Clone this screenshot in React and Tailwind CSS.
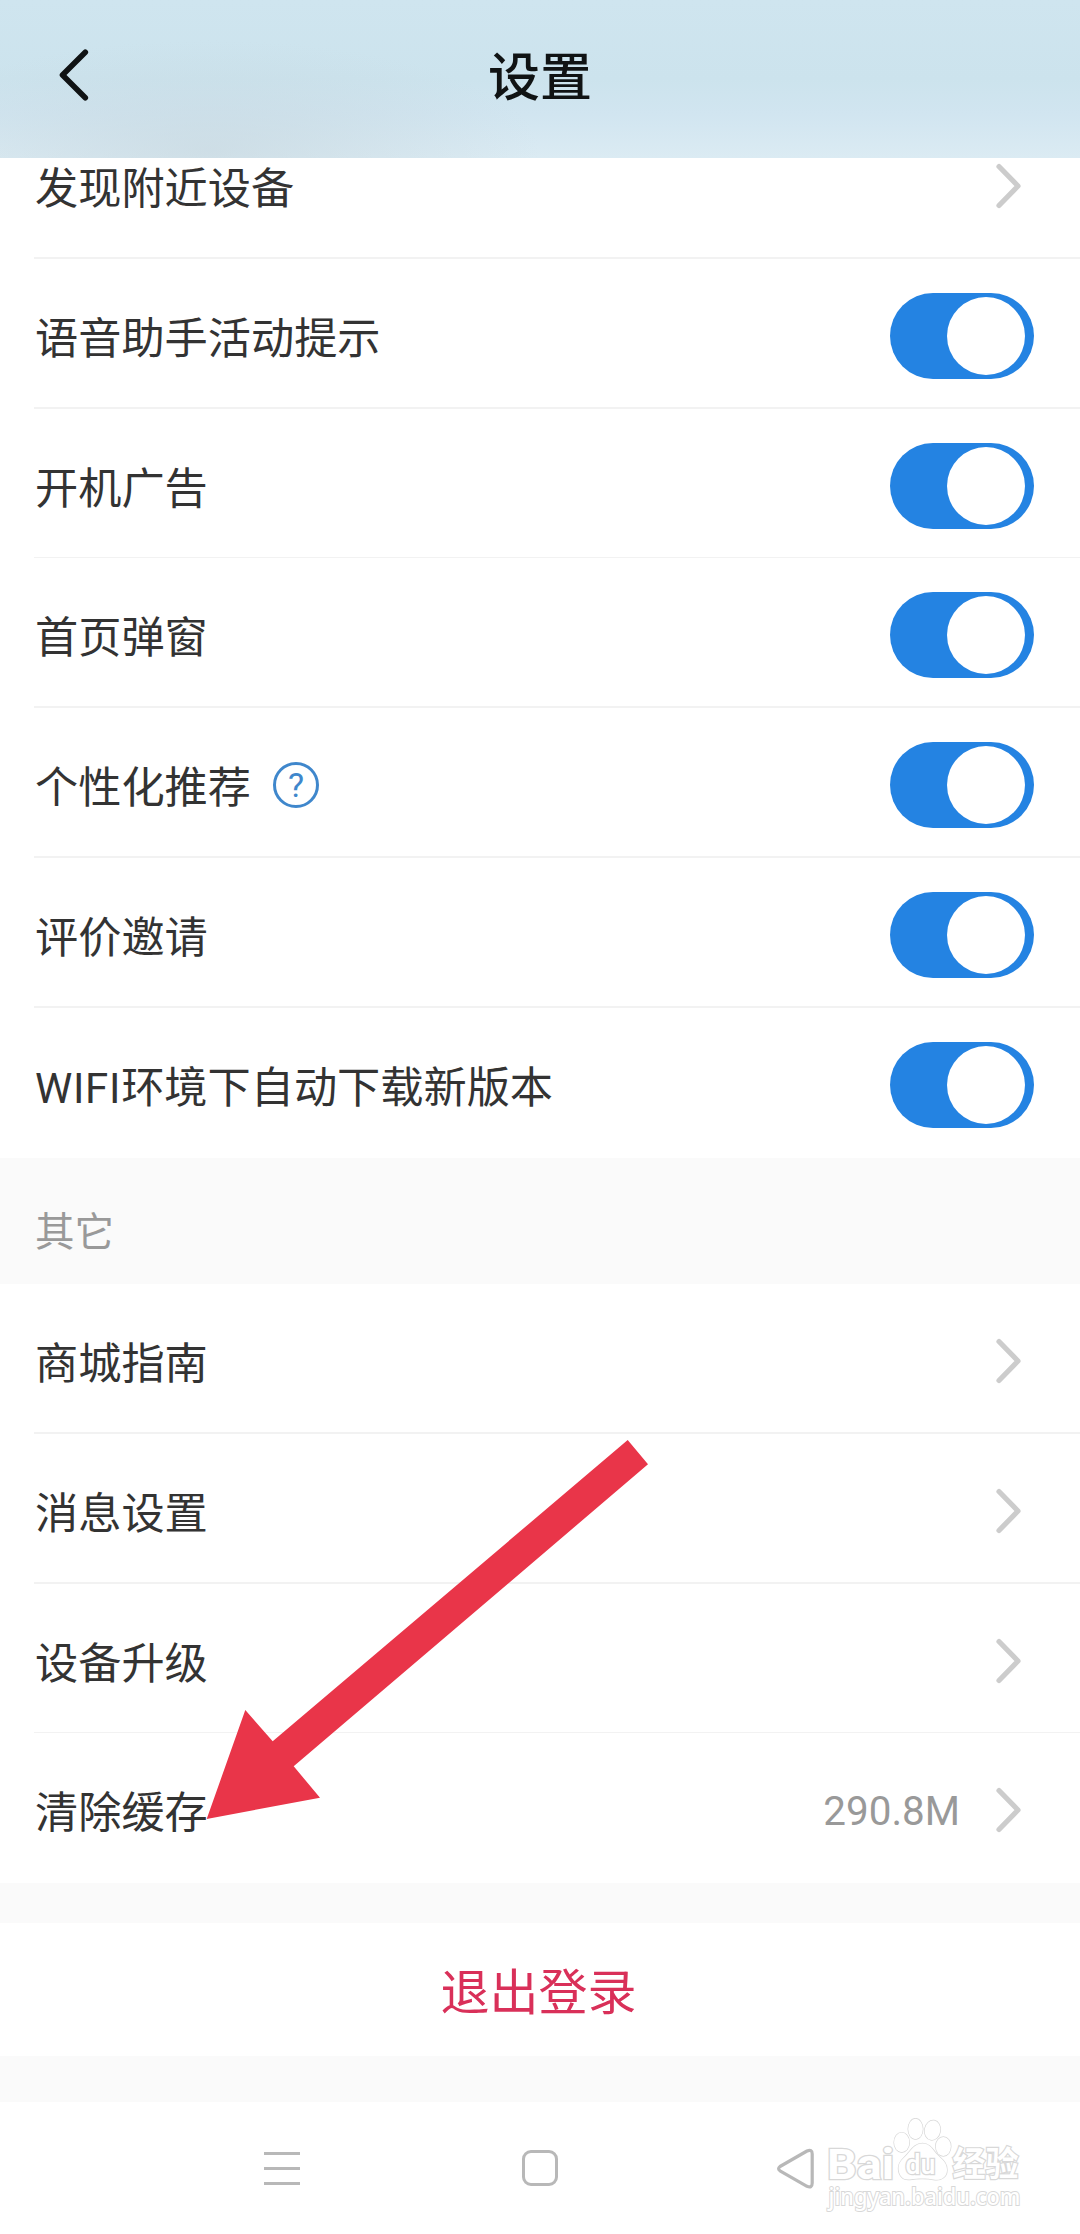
import React from "react";

const GENERAL = [
  { label: "语音助手活动提示", height: "h-[150px]", line: "border-b-2" },
  { label: "开机广告", height: "h-[149px]", line: "border-b" },
  { label: "首页弹窗", height: "h-[150px]", line: "border-b-2" },
  { label: "个性化推荐", height: "h-[150px]", line: "border-b-2", help: true },
  { label: "评价邀请", height: "h-[150px]", line: "border-b-2" },
  { latin: "WIFI", label: "环境下自动下载新版本", height: "h-[150px]", line: "border-b-0" },
];

const OTHER = [
  { label: "商城指南", height: "h-[150px]", line: "border-b-2" },
  { label: "消息设置", height: "h-[150px]", line: "border-b-2" },
  { label: "设备升级", height: "h-[149px]", line: "border-b" },
  { label: "清除缓存", height: "h-[150px]", line: "border-b-0", value: "290.8M" },
];

function Chevron() {
  return (
    <svg className="h-[46px] w-[28px] shrink-0" viewBox="0 0 28 46" fill="none" stroke="#cccccc" strokeWidth="5.2" strokeLinecap="round" strokeLinejoin="round">
      <path d="M5 3.5 L24 23 L5 42.5" />
    </svg>
  );
}

function Toggle() {
  return (
    <div className="flex h-[86px] w-[144px] shrink-0 items-center justify-end rounded-full bg-[#2483e2] pr-[9px]">
      <div className="size-[78px] rounded-full bg-white" />
    </div>
  );
}

function Row({ latin, label, help, value, height, line, toggle }) {
  return (
    <div className={`ml-[34px] flex items-start border-[#f2f2f2] ${height} ${line}`}>
      <div className="flex h-[154px] flex-1 items-center pl-px text-[43.2px] leading-none text-[#333333]">
        {latin && <span className="pt-[7px] text-[42px] tracking-[0.7px]">{latin}</span>}
        <span className="pt-[8px]">{label}</span>
        {help && (
          <span className="ml-[22px] flex size-[46px] items-center justify-center rounded-full border-[3px] border-[#3f87cc] text-[34px] leading-none text-[#3f87cc]">
            ?
          </span>
        )}
      </div>
      <div className={toggle ? "flex h-[154px] items-center pr-[46px]" : "flex h-[154px] items-center pr-[58px]"}>
        {value && <span className="mr-[34px] pt-[5px] text-[40.4px] leading-none text-[#999999]">{value}</span>}
        {toggle ? <Toggle /> : <Chevron />}
      </div>
    </div>
  );
}

function Watermark() {
  return (
    <svg className="absolute top-[2110px] left-[820px] h-[110px] w-[210px]" viewBox="820 2110 210 110" fill="#ffffff" stroke="#d8d8d8" strokeWidth="1.4" paintOrder="stroke">
      <text x="827" y="2178.5" fontSize="43" fontWeight="700" textLength="67" lengthAdjust="spacingAndGlyphs" strokeWidth="2.6">Bai</text>
      <ellipse cx="901.7" cy="2142.4" rx="7.6" ry="9.8" />
      <ellipse cx="915.5" cy="2129" rx="7.3" ry="10.2" />
      <ellipse cx="932.5" cy="2130.2" rx="7.8" ry="9.8" transform="rotate(10 932.5 2130.2)" />
      <ellipse cx="943.3" cy="2146.5" rx="7.5" ry="9.5" />
      <path d="M922.5 2143.5 C930 2143.5 933 2150 937 2154.5 C942 2159.5 947 2162.5 947 2170 C947 2177 941 2180.5 935 2179.7 C926 2178 919 2178 910 2179.5 C902 2180.5 898.5 2174.5 898.5 2168 C898.5 2161.5 903.5 2158.5 907.5 2154 C911.5 2149.5 915 2143.5 922.5 2143.5 Z" />
      <text x="905.5" y="2173.5" fontSize="27" fontWeight="500" textLength="30" lengthAdjust="spacingAndGlyphs" strokeWidth="2.6">du</text>
      <text x="952.5" y="2176" fontSize="34" fontWeight="700" textLength="66" lengthAdjust="spacingAndGlyphs" strokeWidth="2.4">经验</text>
      <text x="828.5" y="2204.5" fontFamily="'Noto Sans', sans-serif" fontSize="23" fontWeight="500" textLength="192" lengthAdjust="spacingAndGlyphs" strokeWidth="2">jingyan.baidu.com</text>
    </svg>
  );
}

export default function App() {
  return (
    <div className="relative flex h-[2234px] w-[1080px] flex-col overflow-hidden bg-white font-['Roboto','Noto_Sans_CJK_SC',sans-serif]">
      <header className="relative z-10 grid h-[158px] shrink-0 grid-cols-[1fr_auto_1fr] items-center bg-[radial-gradient(ellipse_330px_110px_at_210px_150px,rgba(196,212,220,0.55),rgba(196,212,220,0)),linear-gradient(180deg,#cfe5ef_0%,#cce3ed_50%,#d1e5f0_72%,#dbebf3_100%)]">
        <svg className="mb-[8px] ml-[57px] h-[56px] w-[34px]" viewBox="0 0 34 56" fill="none" stroke="#101314" strokeWidth="5.6" strokeLinecap="round" strokeLinejoin="round">
          <path d="M28.3 5.3 L5.5 28 L28.3 50.7" />
        </svg>
        <h1 className="text-[52px] leading-none font-medium text-[#101314]">设置</h1>
        <span />
      </header>

      <main className="flex flex-col">
        <section className="-mt-[49px]">
          <Row label="发现附近设备" height="h-[150px]" line="border-b-2" />
          {GENERAL.map((item) => (
            <Row key={item.label} {...item} toggle />
          ))}
        </section>

        <h2 className="flex h-[126px] items-center bg-[#fafafa] pt-[23px] pl-[35px] text-[39.5px] leading-none text-[#999999]">其它</h2>

        <section>
          {OTHER.map((item) => (
            <Row key={item.label} {...item} />
          ))}
        </section>

        <div className="h-[40px] bg-[#fafafa]" />
        <button className="flex h-[133px] items-center justify-center pt-[8px] pr-[3px] text-[49px] leading-none text-[#d93059]">退出登录</button>
        <div className="h-[46px] bg-[#fafafa]" />
      </main>

      <nav className="flex h-[132px] shrink-0 items-start pt-[46px] pl-[264px]">
        <div className="mt-[4px] flex w-[36px] flex-col gap-[12px]">
          <div className="h-[3px] bg-[#b8b8b8]" />
          <div className="h-[3px] bg-[#b8b8b8]" />
          <div className="h-[3px] bg-[#b8b8b8]" />
        </div>
        <div className="mt-[2px] ml-[222px] size-[36px] rounded-[9px] border-[3px] border-[#b8b8b8]" />
        <svg className="ml-[218px] h-[42px] w-[40px]" viewBox="0 0 40 42" fill="none" stroke="#b8b8b8" strokeWidth="3.2" strokeLinejoin="round">
          <path d="M4 18.5 L31 3 Q36.2 0.8 36.2 6 V35 Q36.2 40.5 31 38.3 L4 22.8 Q1.2 20.7 4 18.5 Z" />
        </svg>
      </nav>

      <Watermark />

      <svg className="absolute top-[1430px] left-[200px] h-[400px] w-[460px]" viewBox="200 1430 460 400" fill="#e93549">
        <polygon points="627.7,1440 648,1464.3 293.7,1766.3 320,1797.7 206.7,1819 245.3,1710 272.7,1741.3" />
      </svg>
    </div>
  );
}
